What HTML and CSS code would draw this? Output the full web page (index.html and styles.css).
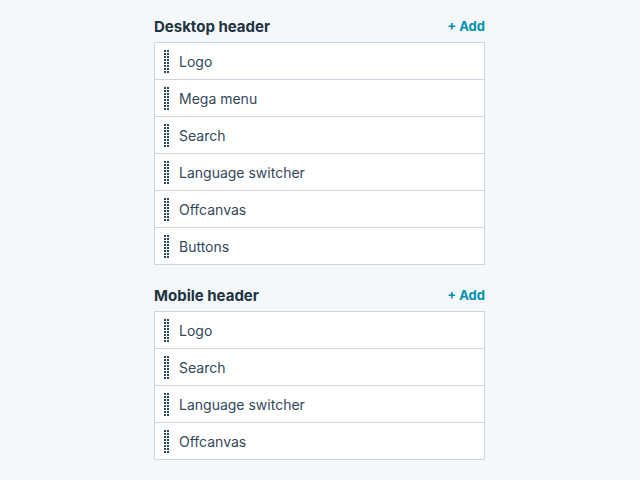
FILE: index.html
```html
<!DOCTYPE html>
<html>
<head>
<meta charset="utf-8">
<link rel="stylesheet" href="styles.css">
</head>
<body>
<svg class="defs" width="0" height="0" aria-hidden="true">
  <defs>
    <pattern id="dots" width="3" height="3" patternUnits="userSpaceOnUse">
      <rect x="0" y="0" width="2" height="2" fill="#2e4760"/>
    </pattern>
    <symbol id="grip" viewBox="0 0 5 23">
      <rect x="0" y="0" width="5" height="23" fill="url(#dots)"/>
    </symbol>
  </defs>
</svg>
<div class="panel">
  <section class="group">
    <div class="group-head">
      <h2 class="group-title">Desktop header</h2>
      <a class="add-link">+ Add</a>
    </div>
    <ul class="list">
      <li class="item"><svg class="handle"><use href="#grip"/></svg><span class="label">Logo</span></li>
      <li class="item"><svg class="handle"><use href="#grip"/></svg><span class="label">Mega menu</span></li>
      <li class="item"><svg class="handle"><use href="#grip"/></svg><span class="label">Search</span></li>
      <li class="item"><svg class="handle"><use href="#grip"/></svg><span class="label">Language switcher</span></li>
      <li class="item"><svg class="handle"><use href="#grip"/></svg><span class="label">Offcanvas</span></li>
      <li class="item"><svg class="handle"><use href="#grip"/></svg><span class="label">Buttons</span></li>
    </ul>
  </section>
  <section class="group">
    <div class="group-head">
      <h2 class="group-title">Mobile header</h2>
      <a class="add-link">+ Add</a>
    </div>
    <ul class="list">
      <li class="item"><svg class="handle"><use href="#grip"/></svg><span class="label">Logo</span></li>
      <li class="item"><svg class="handle"><use href="#grip"/></svg><span class="label">Search</span></li>
      <li class="item"><svg class="handle"><use href="#grip"/></svg><span class="label">Language switcher</span></li>
      <li class="item"><svg class="handle"><use href="#grip"/></svg><span class="label">Offcanvas</span></li>
    </ul>
  </section>
</div>
</body>
</html>
```
FILE: styles.css
```css
html, body {
  margin: 0;
  padding: 0;
  background: #f5f8fa;
}
body {
  font-family: "Inter", "Noto Sans", sans-serif;
  color: #33475b;
}
.defs {
  position: absolute;
  width: 0;
  height: 0;
}
.panel {
  width: 331px;
  margin-left: 154px;
  padding-top: 16px;
  display: flex;
  flex-direction: column;
  gap: 20px;
}
.group {
  display: flex;
  flex-direction: column;
  gap: 6px;
}
.group-head {
  display: flex;
  justify-content: space-between;
  align-items: center;
  height: 20px;
}
.group-title {
  margin: 0;
  font-size: 15px;
  font-weight: 700;
  color: #213343;
}
.add-link {
  font-size: 13px;
  font-weight: 700;
  color: #0091ae;
}
.list {
  list-style: none;
  margin: 0;
  padding: 0;
  background: #fff;
  border: 1px solid #cbd6e2;
}
.item {
  display: flex;
  align-items: center;
  height: 36px;
  padding-left: 9px;
  gap: 10px;
}
.item + .item {
  border-top: 1px solid #cbd6e2;
}
.handle {
  width: 5px;
  height: 23px;
  flex: none;
}
.label {
  font-size: 14px;
  color: #33475b;
}
```
